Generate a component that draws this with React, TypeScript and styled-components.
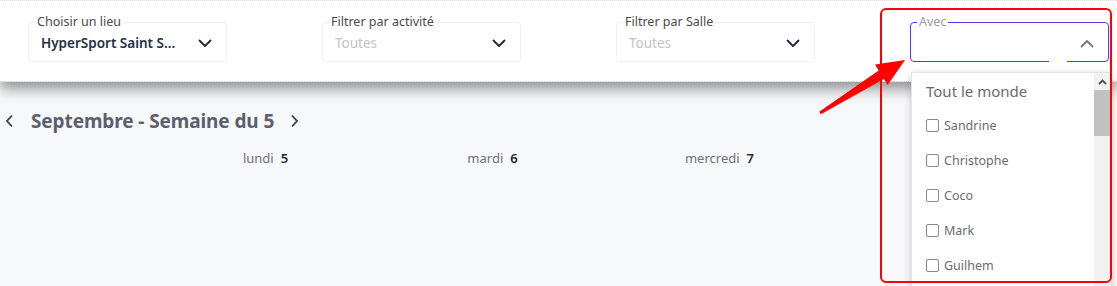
import React from "react";
import styled, {createGlobalStyle} from "styled-components";

const GlobalStyle = createGlobalStyle`
  body {
    margin: 0;
    background: #f7f8fa;
    font-family: "Noto Sans", "Open Sans", sans-serif;
  }
`

const Page = styled.div`
  position: relative;
  width: 1117px;
  height: 286px;
  overflow: hidden;
  background: #f7f8fa;
`

const Header = styled.header`
  height: 82px;
  background: #fff;
  border-top: 1px dotted #dcdcdc;
  border-bottom: 1px dotted #d0d0d0;
  box-shadow: 0 6px 14px rgba(0, 0, 0, 0.45);
  display: flex;
  gap: 95px;
  padding: 21px 0 0 28px;
  box-sizing: border-box;
  position: relative;
  z-index: 1;
`

const Field = styled.div<{ active?: boolean }>`
  position: relative;
  width: 199px;
  height: 40px;
  box-sizing: border-box;
  border: 1px solid ${({active}) => active ? '#6c2ff2' : '#efefef'};
  border-radius: 4px;
  display: flex;
  align-items: center;
  justify-content: space-between;
  padding: 2px 14px 0 12px;
`

const Label = styled.span<{ muted?: boolean }>`
  position: absolute;
  top: -8px;
  left: 6px;
  padding: 0 2px;
  background: #fff;
  font-size: 12.5px;
  line-height: 14px;
  color: ${({muted}) => muted ? '#9a9a9a' : '#4a4a4a'};
`

const Value = styled.span<{ placeholder?: boolean }>`
  font-size: 13.5px;
  font-weight: ${({placeholder}) => placeholder ? 400 : 600};
  color: ${({placeholder}) => placeholder ? '#c4c4c4' : '#243047'};
  white-space: nowrap;
`

const Notch = styled.div`
  position: absolute;
  bottom: -1px;
  left: 138px;
  width: 18px;
  height: 2px;
  background: #fff;
`

const Caret = styled.div`
  position: absolute;
  bottom: -11px;
  left: 132px;
  width: 0;
  height: 0;
  border-left: 15px solid transparent;
  border-right: 15px solid transparent;
  border-bottom: 11px solid #fff;
  z-index: 3;
`

const Chevron: React.FC<{ up?: boolean; color?: string }> = ({up, color = '#1f2533'}) => (
    <svg width="14" height="9" viewBox="0 0 14 9">
        <path d={up ? "M1.5 7.5 L7 2 L12.5 7.5" : "M1.5 1.5 L7 7 L12.5 1.5"} fill="none" stroke={color}
              strokeWidth="1.8" strokeLinecap="round" strokeLinejoin="round"/>
    </svg>
)

const Dropdown = styled.div`
  position: absolute;
  top: 72px;
  left: 911px;
  width: 199px;
  height: 230px;
  background: #fff;
  border: 1px solid #e4e4e4;
  box-shadow: 0 2px 8px rgba(0, 0, 0, 0.18);
  z-index: 2;
  display: flex;
`

const OptionList = styled.ul`
  flex: 1;
  list-style: none;
  margin: 0;
  padding: 8px 0 0 14px;
`

const AllOption = styled.li`
  font-size: 15px;
  color: #6b6b6b;
  line-height: 20px;
  margin-bottom: 7px;
`

const Option = styled.li`
  display: flex;
  align-items: center;
  gap: 5px;
  height: 35px;
  font-size: 12.5px;
  line-height: 16px;
  color: #6b6b6b;
`

const Box = styled.span`
  width: 11px;
  height: 11px;
  border: 1.5px solid #8a8894;
  border-radius: 2px;
`

const Scrollbar = styled.div`
  width: 17px;
  background: #f1f1f1;
  display: flex;
  flex-direction: column;
  align-items: center;
`

const ScrollArrow = styled.div`
  height: 17px;
  display: flex;
  align-items: center;
  justify-content: center;
`

const Thumb = styled.div`
  width: 17px;
  height: 46px;
  background: #c1c1c1;
`

const Nav = styled.div`
  display: flex;
  align-items: center;
  height: 26px;
  margin-top: 26px;
  padding-left: 3px;
`

const NavButton = styled.span`
  display: flex;
  width: 12px;
  justify-content: center;
`

const Title = styled.h2`
  margin: 0 14px 0 16px;
  font-size: 19px;
  font-weight: 700;
  color: #5b5f6e;
  letter-spacing: -0.1px;
`

const Days = styled.div`
  display: grid;
  grid-template-columns: repeat(3, 227px);
  margin: 15px 0 0 152px;
`

const Day = styled.div`
  display: flex;
  justify-content: center;
  gap: 7px;
  font-size: 13px;
  color: #6f6f7a;

  b {
    font-weight: 600;
    color: #26262e;
  }
`

const Highlight = styled.div`
  position: absolute;
  left: 880px;
  top: 8px;
  width: 232px;
  height: 275px;
  box-sizing: border-box;
  border: 2px solid #ff0000;
  border-radius: 6px;
  z-index: 5;
`

const Pointer = styled.svg`
  position: absolute;
  left: 810px;
  top: 50px;
  z-index: 5;
`

const people = ['Sandrine', 'Christophe', 'Coco', 'Mark', 'Guilhem']

const App: React.FC = () => {
    return (
        <Page>
            <GlobalStyle/>
            <Header>
                <Field>
                    <Label>Choisir un lieu</Label>
                    <Value>HyperSport Saint S...</Value>
                    <Chevron/>
                </Field>
                <Field>
                    <Label>Filtrer par activité</Label>
                    <Value placeholder>Toutes</Value>
                    <Chevron/>
                </Field>
                <Field>
                    <Label>Filtrer par Salle</Label>
                    <Value placeholder>Toutes</Value>
                    <Chevron/>
                </Field>
                <Field active>
                    <Label muted>Avec</Label>
                    <span/>
                    <Chevron up color="#777"/>
                    <Notch/>
                    <Caret/>
                </Field>
            </Header>

            <Dropdown>
                <OptionList>
                    <AllOption>Tout le monde</AllOption>
                    {people.map(name => (
                        <Option key={name}><Box/>{name}</Option>
                    ))}
                </OptionList>
                <Scrollbar>
                    <ScrollArrow>
                        <svg width="9" height="6" viewBox="0 0 9 6">
                            <path d="M1 5 L4.5 1.5 L8 5" fill="none" stroke="#505050" strokeWidth="1.8"/>
                        </svg>
                    </ScrollArrow>
                    <Thumb/>
                </Scrollbar>
            </Dropdown>

            <Nav>
                <NavButton>
                    <svg width="9" height="14" viewBox="0 0 9 14">
                        <path d="M7 1.5 L2 7 L7 12.5" fill="none" stroke="#3a3d48" strokeWidth="1.8"/>
                    </svg>
                </NavButton>
                <Title>Septembre - Semaine du 5</Title>
                <NavButton>
                    <svg width="9" height="14" viewBox="0 0 9 14">
                        <path d="M2 1.5 L7 7 L2 12.5" fill="none" stroke="#3a3d48" strokeWidth="1.8"/>
                    </svg>
                </NavButton>
            </Nav>

            <Days>
                <Day>lundi <b>5</b></Day>
                <Day>mardi <b>6</b></Day>
                <Day>mercredi <b>7</b></Day>
            </Days>

            <Highlight/>
            <Pointer width="100" height="70" viewBox="0 0 100 70">
                <polygon points="9.2,61.7 68.7,20.6 65,14.6 95,10 77.6,35 73.9,29 10.8,64.3" fill="#ff0000"/>
            </Pointer>
        </Page>
    )
}

export default App
